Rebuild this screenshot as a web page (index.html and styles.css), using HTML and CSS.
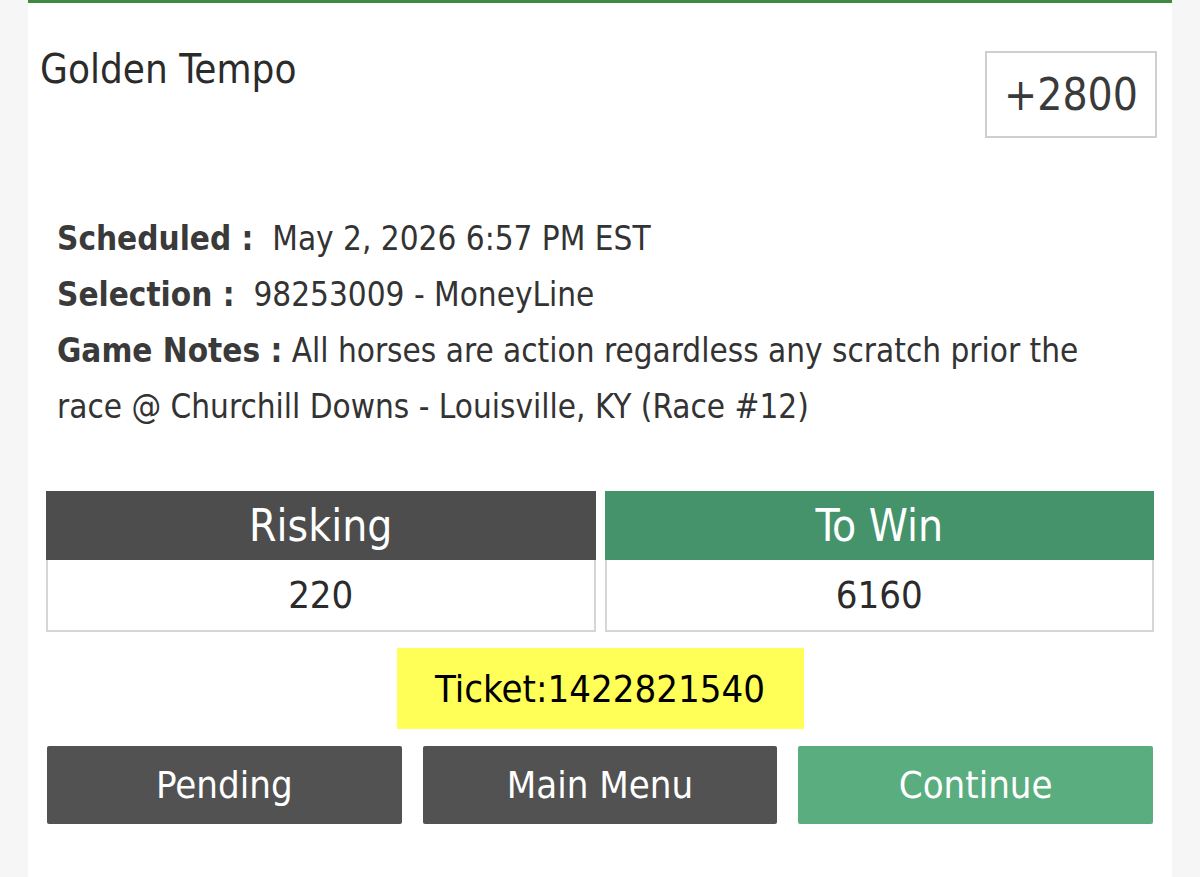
FILE: index.html
```html
<!DOCTYPE html>
<html>
<head>
<meta charset="utf-8">
<link rel="stylesheet" href="styles.css">
</head>
<body>
<div class="page">
  <div class="card">
    <div class="head">
      <div class="title">Golden Tempo</div>
      <div class="odds">+2800</div>
    </div>
    <div class="info">
      <p class="line"><span class="lbl">Scheduled :</span>&nbsp; <span class="val">May 2, 2026 6:57 PM EST</span></p>
      <p class="line"><span class="lbl">Selection :</span>&nbsp; <span class="val">98253009 - MoneyLine</span></p>
      <p class="line"><span class="lbl">Game Notes :</span> <span class="val">All horses are action regardless any scratch prior the race @ Churchill Downs - Louisville, KY (Race #12)</span></p>
    </div>
    <div class="amounts">
      <div class="amt">
        <div class="amt-h dark">Risking</div>
        <div class="amt-v">220</div>
      </div>
      <div class="amt">
        <div class="amt-h green">To Win</div>
        <div class="amt-v">6160</div>
      </div>
    </div>
    <div class="ticket-row">
      <div class="ticket">Ticket:1422821540</div>
    </div>
    <div class="buttons">
      <div class="btn dark">Pending</div>
      <div class="btn dark">Main Menu</div>
      <div class="btn light-green">Continue</div>
    </div>
  </div>
</div>
</body>
</html>
```
FILE: styles.css
```css
html, body {
  margin: 0;
  padding: 0;
  background: #f6f6f6;
}
body {
  font-family: "DejaVu Sans Condensed", "Liberation Sans", sans-serif;
  color: #333;
}
.page {
  width: 1200px;
  height: 877px;
  overflow: hidden;
}
.card {
  margin: 0 28px;
  height: 877px;
  background: #fff;
  border-top: 3px solid #3f8a3f;
  box-sizing: border-box;
}
.head {
  display: flex;
  justify-content: space-between;
  align-items: flex-start;
  padding: 42px 15px 0 12px;
}
.title {
  font-size: 40px;
  line-height: 48px;
  color: #2b2b2b;
}
.odds {
  margin-top: 6px;
  width: 168px;
  height: 83px;
  border: 2px solid #cfcfcf;
  display: flex;
  align-items: center;
  justify-content: center;
  font-size: 44px;
  color: #3a3a3a;
}
.info {
  padding: 73px 50px 0 29px;
  font-size: 33px;
  line-height: 56px;
  color: #333;
}
.line {
  margin: 0;
}
.lbl {
  font-weight: bold;
  color: #3a3a3a;
}
.amounts {
  display: flex;
  gap: 9px;
  margin: 56px 18px 0 18px;
}
.amt {
  flex: 1;
}
.amt-h {
  height: 69px;
  display: flex;
  align-items: center;
  justify-content: center;
  color: #fff;
  font-size: 44px;
}
.amt-h.dark { background: #4d4d4d; }
.amt-h.green { background: #44936b; }
.amt-v {
  height: 70px;
  border: 2px solid #d6d6d6;
  border-top: none;
  display: flex;
  align-items: center;
  justify-content: center;
  font-size: 38px;
  color: #2b2b2b;
}
.ticket-row {
  display: flex;
  justify-content: center;
  margin-top: 16px;
}
.ticket {
  width: 407px;
  height: 81px;
  background: #ffff57;
  display: flex;
  align-items: center;
  justify-content: center;
  font-size: 38px;
  color: #000;
}
.buttons {
  display: flex;
  gap: 21px;
  margin: 17px 19px 0 19px;
}
.btn {
  flex: 1;
  height: 78px;
  border-radius: 2px;
  display: flex;
  align-items: center;
  justify-content: center;
  color: #fff;
  font-size: 38px;
}
.btn.dark { background: #525252; }
.btn.light-green { background: #5aad7e; }
```
